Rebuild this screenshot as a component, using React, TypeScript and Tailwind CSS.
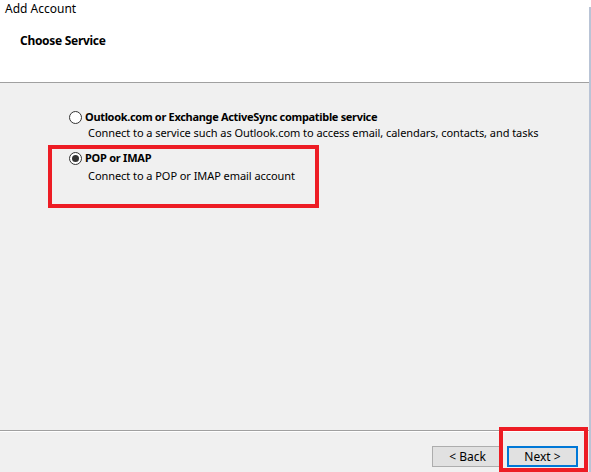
import React from "react";

function Radio({ checked }: { checked?: boolean }) {
  return (
    <div className="w-[13px] h-[13px] rounded-full border border-[#333333] bg-white flex items-center justify-center shrink-0">
      {checked && <div className="w-[7px] h-[7px] rounded-full bg-[#333333]" />}
    </div>
  );
}

export default function App() {
  return (
    <div
      className="w-[591px] h-[472px] relative flex overflow-hidden bg-[#f0f0f0] text-[12px] text-black"
      style={{ fontFamily: '"Noto Sans", "Open Sans", sans-serif' }}
    >
      <div className="flex-1 flex flex-col">
        <div className="h-[82px] bg-white flex flex-col pt-px">
          <div className="pl-[5px] leading-[16px]">Add Account</div>
          <div className="pl-[20px] mt-[16px] leading-[16px] font-bold tracking-[-0.3px]">Choose Service</div>
        </div>
        <div className="h-px bg-[#a0a0a0]" />
        <div className="flex-1 flex flex-col pl-[69px] pt-[26px] text-[11px]">
          <div className="flex items-center gap-[3px] leading-[16px]">
            <Radio />
            <span className="font-bold tracking-[-0.32px]">Outlook.com or Exchange ActiveSync compatible service</span>
          </div>
          <div className="pl-[19px] leading-[16px] tracking-[-0.06px]">
            Connect to a service such as Outlook.com to access email, calendars, contacts, and tasks
          </div>
          <div className="flex items-center gap-[3px] leading-[16px] mt-[9px]">
            <Radio checked />
            <span className="font-bold tracking-[-0.25px]">POP or IMAP</span>
          </div>
          <div className="pl-[19px] mt-[2px] leading-[16px] tracking-[-0.06px]">Connect to a POP or IMAP email account</div>
        </div>
        <div className="h-px bg-[#a0a0a0]" />
        <div className="h-px bg-white" />
        <div className="h-[40px] flex justify-end items-start pt-[14px] pr-[11px] gap-[4px]">
          <button className="w-[71px] h-[21px] border border-[#adadad] bg-[#e1e1e1] leading-[18px] text-[12px]">
            &lt; Back
          </button>
          <button className="w-[71px] h-[21px] border-2 border-[#0078d7] bg-[#e1e1e1] leading-[17px] text-[12px]">
            Next &gt;
          </button>
        </div>
      </div>
      <div className="w-[2px] flex flex-col">
        <div className="h-[7px] bg-white" />
        <div className="flex-1 bg-[#b9c4d6]" />
      </div>

      <div className="absolute left-[48px] top-[145px] w-[271px] h-[63px] border-4 border-[#ed1c24]" />
      <div className="absolute left-[499px] top-[427px] w-[89px] h-[45px] border-4 border-[#ed1c24]" />
    </div>
  );
}
